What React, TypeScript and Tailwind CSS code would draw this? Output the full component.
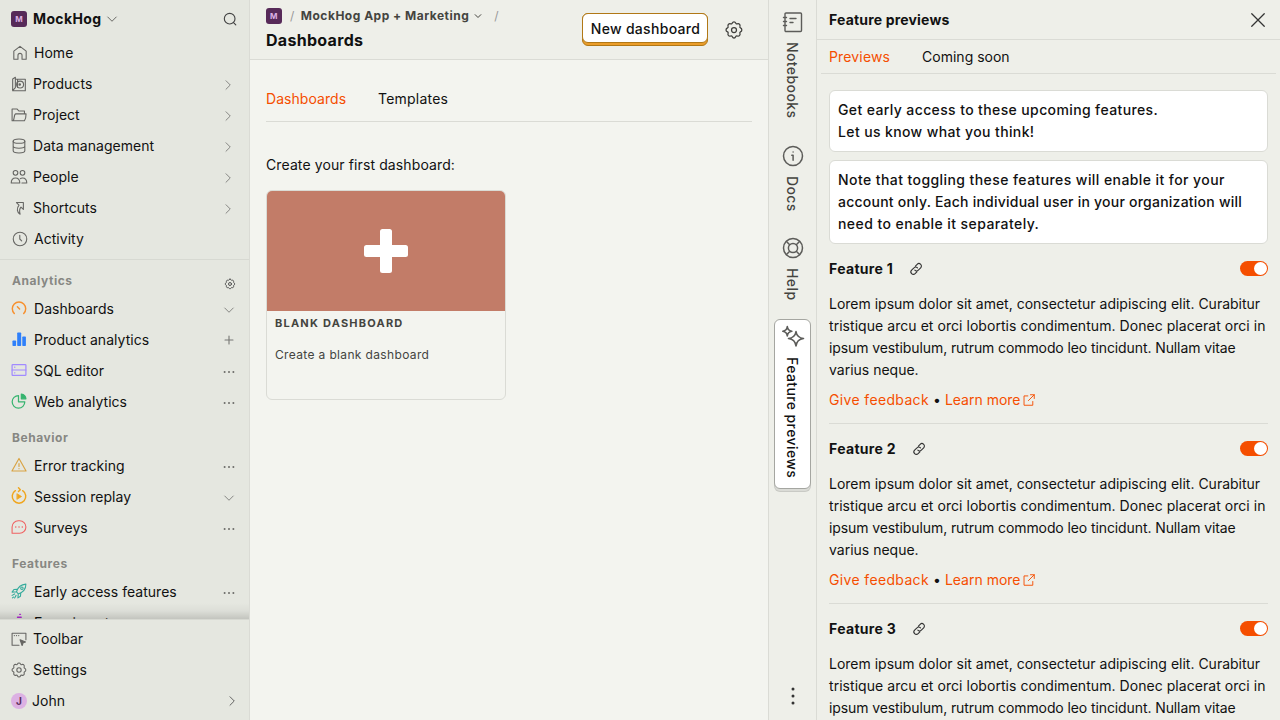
import type { ReactNode } from 'react'

type IconProps = { className?: string; width?: number; box?: string; children?: ReactNode }

function Svg({ className = '', width = 1.5, box = '0 0 24 24', children }: IconProps) {
  return (
    <svg
      viewBox={box}
      fill="none"
      stroke="currentColor"
      strokeWidth={width}
      strokeLinecap="round"
      strokeLinejoin="round"
      className={`block shrink-0 overflow-visible ${className}`}
    >
      {children}
    </svg>
  )
}

const TIGHT = '1 1 22 22'

const ChevronDown = ({ className, width = 1.8 }: IconProps) => (
  <Svg className={className} width={width}>
    <path d="M3.500 8 12 16.500 20.500 8" />
  </Svg>
)
const ChevronRight = ({ className }: IconProps) => (
  <Svg className={className} width={1.8}>
    <path d="M8 3.500 16.500 12 8 20.500" />
  </Svg>
)
const Dots = ({ className }: IconProps) => (
  <svg viewBox="0 0 24 24" fill="currentColor" className={`block shrink-0 ${className}`}>
    <circle cx="4.500" cy="12" r="1.700" />
    <circle cx="12" cy="12" r="1.700" />
    <circle cx="19.500" cy="12" r="1.700" />
  </svg>
)
const Gear = ({ className, width, box }: IconProps) => (
  <Svg className={className} width={width} box={box}>
    <path d="M12 2.300c1 0 1.800.7 2.200 1.600.3.700 1 1 1.700.7.900-.4 2-.3 2.700.5.700.7.800 1.800.5 2.700-.3.700 0 1.400.7 1.700.9.400 1.600 1.200 1.600 2.500s-.7 1.900-1.600 2.300c-.7.300-1 1-.7 1.700.3.900.2 2-.5 2.700s-1.800.8-2.700.5c-.7-.3-1.400 0-1.700.7-.4.900-1.200 1.800-2.200 1.800s-1.800-.9-2.200-1.800c-.3-.7-1-1-1.700-.7-.9.300-2 .2-2.700-.5s-.8-1.800-.5-2.700c.3-.7 0-1.400-.7-1.700-.9-.4-1.800-1.200-1.800-2.300s.9-2.100 1.800-2.500c.7-.3 1-1 .7-1.700-.3-.9-.2-2 .5-2.700.7-.8 1.800-.9 2.700-.5.700.3 1.400 0 1.700-.7.400-.9 1.200-1.600 2.200-1.600z" />
    <circle cx="12" cy="12" r="3" />
  </Svg>
)
const Search = ({ className }: IconProps) => (
  <Svg className={className} width={1.700}>
    <circle cx="11.500" cy="11.500" r="8" />
    <path d="m17.300 17.300 3.400 3.400" />
  </Svg>
)

const I = 'size-4 text-[#666663]'

const icons: Record<string, ReactNode> = {
  Home: (
    <Svg className={I} box={TIGHT}>
      <path d="M3.500 9.500 12 2.800l8.500 6.700v11h-5.700v-5.200a2.800 2.800 0 0 0-5.600 0v5.200H3.500z" />
    </Svg>
  ),
  Products: (
    <Svg className={I} box={TIGHT}>
      <path d="M7 5.500h13.700v15.700H3.300V5L7 2.800V17l-3.700 4.200M10 5.500v11" />
      <circle cx="13.500" cy="12.800" r="4.800" />
      <circle cx="13" cy="12.800" r="1" fill="currentColor" />
    </Svg>
  ),
  Project: (
    <Svg className={I} box={TIGHT}>
      <path d="M4 20h15.500c1.200-2 2.200-5 2.200-9.500H7.500C5 10.500 6 17 4 20H2.500V3.800h7l2.300 2.700h7.700v4" />
    </Svg>
  ),
  'Data management': (
    <Svg className={I} box={TIGHT}>
      <ellipse cx="12" cy="5.300" rx="8" ry="3" />
      <path d="M4 5.300v13.400c0 1.700 3.600 3 8 3s8-1.300 8-3V5.300M4 12c0 1.700 3.600 3 8 3s8-1.300 8-3" />
    </Svg>
  ),
  People: (
    <Svg className={I} box={TIGHT}>
      <circle cx="7.200" cy="6.300" r="3.200" />
      <circle cx="16.800" cy="6.300" r="3.200" />
      <path d="M1.300 20.300c0-4 2.200-7 5.900-7s5.900 3 5.900 7zM13.800 14.200c.8-.6 1.800-.9 3-.9 3.700 0 5.900 3 5.900 7H16" />
    </Svg>
  ),
  Shortcuts: (
    <Svg className={I} box={TIGHT}>
      <path d="M8.500 4.500h9.500v9.500l-3.300-3.300c-2.500 2.500-2.200 5.800-1.200 9.800C9 18 8.500 12.500 12 8z" />
    </Svg>
  ),
  Activity: (
    <Svg className={I} box={TIGHT}>
      <circle cx="12" cy="12" r="9.300" />
      <path d="M11.700 6.800V12l2.600 2.600" />
    </Svg>
  ),
  Dashboards: (
    <Svg className="mb-0.5 size-4 text-[#f7902d]" width={2} box={TIGHT}>
      <path d="M5.500 19.500a9.200 9.200 0 1 1 13 0M12.800 13.300 9.800 10.300" />
    </Svg>
  ),
  'Product analytics': (
    <svg viewBox="1 1 22 22" fill="#2f80fa" className="mb-0.5 block size-4 shrink-0">
      <rect x="3" y="14" width="5" height="7.500" rx="1" />
      <rect x="9.500" y="3" width="5.500" height="18.500" rx="1" />
      <rect x="16.500" y="8.500" width="5" height="13" rx="1" />
    </svg>
  ),
  'SQL editor': (
    <Svg className="mb-0.5 size-4 text-[#a18aff]" width={1.700} box={TIGHT}>
      <rect x="2.500" y="4.500" width="19" height="15" rx="1" />
      <path d="M2.500 12h19M6 8.200h.3M6 15.800h.3" />
    </Svg>
  ),
  'Web analytics': (
    <Svg className="mb-0.5 size-4 text-[#36b46f]" width={1.700} box={TIGHT}>
      <path d="M11.300 4.500a8.700 8.700 0 1 0 8.700 8.700h-8.700z" />
      <path d="M15.200 2.500c3.500.500 6 3 6.300 6.500h-6.300z" fill="currentColor" />
    </Svg>
  ),
  'Error tracking': (
    <Svg className="mb-0.5 size-4 text-[#d9a343]" width={1.600} box={TIGHT}>
      <path d="M12 3 2.300 20.200h19.400zM12 10v4M12 16.800v.2" />
    </Svg>
  ),
  'Session replay': (
    <Svg className="mb-0.5 size-4 text-[#f0a51c]" width={2} box={TIGHT}>
      <path d="M17 4.700a9.300 9.300 0 1 1-10 0M11.300.8 13.800 3.300 11.300 5.800" />
      <path d="m9.500 9 6 3.700-6 3.700z" fill="currentColor" strokeWidth={1} />
    </Svg>
  ),
  Surveys: (
    <Svg className="mb-0.5 size-4 text-[#f06262]" box={TIGHT}>
      <path d="M2.500 20.500V12a8.500 8.500 0 0 1 8.500-8.500h2a8.500 8.500 0 0 1 0 17z" />
      <path d="M7.500 12h.1M12 12h.1M16.500 12h.1" strokeWidth={2} />
    </Svg>
  ),
  'Early access features': (
    <Svg className="mb-0.5 size-4 text-[#35ab9c]" box={TIGHT}>
      <path d="M8.500 13c2-6.500 6-10 13-10.500 0 7-4 11.500-10.500 13.500zM9.500 9.500 5 10l-2.500 3.500 6-.5M14.500 14.500l-.5 4.800-3.500 2.200.5-5.500M6 16l-3.500 2M8 18l-2 3.500M3 21.500l1.500-1.200" />
      <circle cx="16" cy="8.200" r="1.700" />
    </Svg>
  ),
  Experiments: (
    <Svg className="mb-0.5 size-4 text-[#b62ad9]" width={2} box={TIGHT}>
      <path d="M10 5.500h5M9 9h6v5l5 7H4l5-7zM13 1.500h1" />
    </Svg>
  ),
  Toolbar: (
    <Svg className={I} box={TIGHT}>
      <path d="M12 20.500H2.500V4h19v9M5.500 7.300h.2M8.500 7.300h.2M11.500 7.300h.2" />
      <path d="m13.500 13 7.500 3-3.300 1.300L16.300 21z" fill="currentColor" />
    </Svg>
  ),
  Settings: <Gear className={I} box={TIGHT} />,
}

type Row = { label: string; end?: 'right' | 'down' | 'plus' | 'dots' }

function End({ kind }: { kind: Row['end'] }) {
  const c = 'size-3 text-[#7c7c79]'
  if (kind === 'right') return <ChevronRight className={c} />
  if (kind === 'down') return <ChevronDown className={c} />
  if (kind === 'dots') return <Dots className="mr-[-2px] size-[14px] text-[#6c6c69]" />
  if (kind === 'plus')
    return (
      <Svg className="mr-[-2px] mb-0.5 size-3 text-[#777774]" width={2.200}>
        <path d="M12 4v16M4 12h16" />
      </Svg>
    )
  return null
}

function NavRow({ row, indent }: { row: Row; indent: string }) {
  return (
    <div className="flex h-[30px] items-center">
      <div className={`flex flex-1 items-center ${indent}`}>
        {icons[row.label]}
        <span className="leading-[18px] tracking-[0.03px]">{row.label}</span>
      </div>
      <div className={`flex w-4 justify-center pt-0.5 ${row.end === 'down' ? 'mr-3' : 'mr-[13px]'}`}>
        <End kind={row.end} />
      </div>
    </div>
  )
}

function Group({ title, rows, gear }: { title: string; rows: Row[]; gear?: boolean }) {
  return (
    <section>
      <div className="flex h-[26px] items-center justify-between pr-[13px] pl-3">
        <span className="text-[12px] font-bold tracking-[0.55px] text-[#878783]">{title}</span>
        {gear && <Gear className="mt-1.5 size-3 text-[#555]" width={2} />}
      </div>
      <div className="flex flex-col gap-px">
        {rows.map((r) => (
          <NavRow key={r.label} row={r} indent="gap-[7px] pl-[11px]" />
        ))}
      </div>
    </section>
  )
}

const top: Row[] = [
  { label: 'Home' },
  { label: 'Products', end: 'right' },
  { label: 'Project', end: 'right' },
  { label: 'Data management', end: 'right' },
  { label: 'People', end: 'right' },
  { label: 'Shortcuts', end: 'right' },
  { label: 'Activity' },
]

function Sidebar() {
  return (
    <aside className="flex w-[250px] shrink-0 flex-col border-r border-[#dadbd5] bg-[#e5e7e0]">
      <div className="flex h-[38px] shrink-0 items-center pl-[11px]">
        <Badge />
        <span className="ml-1.5 text-[14px] font-bold tracking-[0.35px]">MockHog</span>
        <ChevronDown className="ml-[5px] size-3 text-[#5b5b58]" />
        <Search className="mr-[11px] ml-auto size-4 text-[#444]" />
      </div>
      <div className="flex flex-col gap-px border-b border-[#d7d9d2] pb-[5px]">
        {top.map((r) => (
          <NavRow key={r.label} row={r} indent={r.end ? 'gap-1.5 pl-[11px]' : 'gap-1.5 pl-3'} />
        ))}
      </div>
      <div className="relative flex min-h-0 flex-1 flex-col gap-2 overflow-hidden pt-2">
        <Group
          title="Analytics"
          gear
          rows={[
            { label: 'Dashboards', end: 'down' },
            { label: 'Product analytics', end: 'plus' },
            { label: 'SQL editor', end: 'dots' },
            { label: 'Web analytics', end: 'dots' },
          ]}
        />
        <Group
          title="Behavior"
          rows={[
            { label: 'Error tracking', end: 'dots' },
            { label: 'Session replay', end: 'down' },
            { label: 'Surveys', end: 'dots' },
          ]}
        />
        <Group
          title="Features"
          rows={[
            { label: 'Early access features', end: 'dots' },
            { label: 'Experiments', end: 'dots' },
          ]}
        />
        <div className="absolute inset-x-0 bottom-0 h-4 bg-linear-to-t from-black/15 via-black/4 to-transparent" />
      </div>
      <div className="flex h-[101px] shrink-0 flex-col gap-px border-t border-[#d7d9d2] pt-1">
        <NavRow row={{ label: 'Toolbar' }} indent="gap-1.5 pl-[11px]" />
        <NavRow row={{ label: 'Settings' }} indent="gap-1.5 pl-[11px]" />
        <div className="flex h-[30px] items-center pr-[11px] pl-[11px]">
          <span className="flex size-4 items-center justify-center rounded-full bg-[#dcb1e3] text-[10px] font-bold text-[#572a59]">
            J
          </span>
          <span className="ml-[5px] leading-[18px]">John</span>
          <ChevronRight className="ml-auto size-3 text-[#555]" />
        </div>
      </div>
    </aside>
  )
}

function Badge() {
  return (
    <span className="flex size-4 shrink-0 items-center justify-center rounded-[3px] bg-[#572a59] pb-px text-[8px] leading-none font-bold text-[#dcb1e3]">
      M
    </span>
  )
}

function Main() {
  return (
    <main className="flex min-w-0 flex-1 flex-col bg-[#f3f4ef]">
      <header className="flex h-[60px] shrink-0 items-center border-b border-[#dadbd5] bg-[#eeefe9] pr-6 pl-4">
        <div className="flex flex-1 flex-col pb-px">
          <div className="flex h-5 items-center text-[12px] font-bold tracking-[0.5px] text-[#44443f]">
            <Badge />
            <span className="ml-2 font-normal text-[#999]">/</span>
            <span className="ml-1.5">MockHog App + Marketing</span>
            <ChevronDown className="ml-[5px] size-2" width={3} />
            <span className="ml-3 font-normal text-[#999]">/</span>
          </div>
          <h1 className="mt-0.5 h-6 text-[16px] leading-6 font-bold tracking-[0.3px]">Dashboards</h1>
        </div>
        <button className="mr-4 h-[33px] w-[126px] rounded-[6px] border border-[#b17816] bg-[#eb9d2a] pb-[2px]">
          <span className="-mx-px -mt-px flex h-[30px] items-center justify-center rounded-[6px] border border-[#b17816] bg-white pt-0.5 pl-px font-medium tracking-[0.3px]">
            New dashboard
          </span>
        </button>
        <Gear className="size-5 text-[#3f3f3c]" />
      </header>
      <div className="flex flex-col px-4">
        <nav className="flex h-[62px] items-end gap-8 border-b border-[#dadbd5] pb-3">
          <span className="tracking-[0.05px] text-[#f54e00]">Dashboards</span>
          <span className="tracking-[0.2px]">Templates</span>
        </nav>
        <p className="mt-[33px] tracking-[0.11px]">Create your first dashboard:</p>
        <article className="mt-[15px] flex h-[210px] w-60 flex-col overflow-hidden rounded-[6px] border border-[#dadbd5]">
          <div className="flex h-[120px] items-center justify-center bg-[#c27c68]">
            <svg viewBox="0 0 44 44" className="size-11" fill="white">
              <rect x="16" width="12" height="44" rx="2.500" />
              <rect y="16" width="44" height="12" rx="2.500" />
            </svg>
          </div>
          <h2 className="mt-1 px-2 text-[11px] leading-4 font-bold tracking-[1.22px] text-[#44443f]">
            BLANK DASHBOARD
          </h2>
          <p className="mt-4 px-2 text-[12px] leading-4 tracking-[0.35px] text-[#44443f]">
            Create a blank dashboard
          </p>
        </article>
      </div>
    </main>
  )
}

function RailTab({ label, icon, className = '' }: { label: string; icon: ReactNode; className?: string }) {
  return (
    <div className={`flex flex-col items-center gap-2 ${className}`}>
      {icon}
      <span className="mr-0.5 leading-5 font-medium tracking-[0.4px] [writing-mode:vertical-rl]">{label}</span>
    </div>
  )
}

function Rail() {
  const c = 'size-6 text-[#5c5c59]'
  return (
    <div className="flex w-12 shrink-0 flex-col items-center border-l border-[#dadbd5] bg-[#eeefe9] pt-[10px] pb-3 text-[#44443f]">
      <RailTab
        label="Notebooks"
        className="h-[134px]"
        icon={
          <Svg className={c} width={1.400}>
            <rect x="4" y="3" width="16.500" height="18.500" rx="1" />
            <path d="M2.500 7.500h3M2.500 11.500h3M2.500 15.500h3M9 8.500h6M9 12.500h3" />
          </Svg>
        }
      />
      <RailTab
        label="Docs"
        className="h-[92px]"
        icon={
          <Svg className={c}>
            <circle cx="12" cy="12" r="9.500" />
            <path d="M10.800 11.300h1.300v5M12.100 8v.1" />
          </Svg>
        }
      />
      <RailTab
        label="Help"
        className="h-[83px]"
        icon={
          <Svg className={c}>
            <circle cx="12" cy="12" r="9.500" />
            <circle cx="12" cy="12" r="4.600" />
            <path d="m5.500 5.500 3.200 3.200M18.500 5.500l-3.200 3.200M5.500 18.500l3.200-3.200M18.500 18.500l-3.200-3.200" />
          </Svg>
        }
      />
      <RailTab
        label="Feature previews"
        className="h-[170px] w-[37px] rounded-[6px] border border-[#a5a6a1] bg-white pt-[5px] text-[#111] shadow-[0_3px_0_-1px_#dadbd6,0_3px_0_0_#c9cac5]"
        icon={
          <Svg className={c} width={1.600}>
            <path d="M15 6.500c.6 4.300 2.700 6.400 7.500 7-4.800.6-6.900 2.700-7.500 7.500-.6-4.800-2.700-6.900-7.500-7.500 4.800-.6 6.900-2.700 7.500-7zM6.300 1.500c.3 3 1.500 4.300 4.500 4.800-3 .5-4.200 1.700-4.500 4.700C6 8 4.800 6.800 1.800 6.300 4.800 5.800 6 4.500 6.300 1.500z" />
          </Svg>
        }
      />
      <svg viewBox="0 0 24 24" fill="#333" className="mt-auto block size-6">
        <circle cx="12" cy="5" r="1.500" />
        <circle cx="12" cy="12" r="1.500" />
        <circle cx="12" cy="19" r="1.500" />
      </svg>
    </div>
  )
}

function Feature({ name }: { name: string }) {
  return (
    <section className="flex h-[180px] shrink-0 flex-col border-b border-[#dadbd5]">
      <div className="mt-3 flex h-[26px] items-center">
        <h3 className="font-bold tracking-[0.32px]">{name}</h3>
        <Svg className="ml-4 size-[14px] text-[#333]" width={1.900}>
          <path d="m11 7 3-3a4 4 0 0 1 6 6l-4 4a4 4 0 0 1-6 0M13.500 17l-3 3a4 4 0 0 1-6-6l4-4a4 4 0 0 1 6 0" />
        </Svg>
        <span className="mb-px ml-auto flex h-[15px] w-7 items-center justify-end rounded-full border border-[#f54e00]/50 bg-[#f54e00]">
          <span className="size-[13px] rounded-full bg-white" />
        </span>
      </div>
      <p className="mt-[11px] leading-[22px] whitespace-nowrap">
        Lorem ipsum dolor sit amet, consectetur adipiscing elit. Curabitur
        <br />
        <span className="tracking-[0.05px]">tristique arcu et orci lobortis condimentum. Donec placerat orci in</span>
        <br />
        <span className="tracking-[-0.1px]">ipsum vestibulum, rutrum commodo leo tincidunt. Nullam vitae</span>
        <br />
        varius neque.
      </p>
      <p className="mt-2 flex items-center leading-[22px] text-[#f54e00]">
        <span className="tracking-[0.35px]">Give feedback</span>
        <span className="mr-1 ml-1 text-[#111]">•</span>
        Learn more
        <Svg className="ml-px size-[14px]" width={1.600}>
          <path d="M10 5H3.500v16h15V14.500M14.500 3h6.500v6.500M21 3 11 13" />
        </Svg>
      </p>
    </section>
  )
}

function Panel() {
  return (
    <aside className="flex w-[464px] shrink-0 flex-col overflow-hidden border-l border-[#dadbd5] bg-[#eeefe9]">
      <div className="flex h-10 shrink-0 items-center justify-between border-b border-[#dadbd5] pr-3 pl-3">
        <h2 className="font-bold tracking-[0.18px]">Feature previews</h2>
        <Svg className="size-5 text-[#333]">
          <path d="m4.500 4.500 15 15M19.500 4.500l-15 15" />
        </Svg>
      </div>
      <nav className="mx-1 flex h-[34px] shrink-0 items-center gap-8 border-b border-[#dadbd5] px-2">
        <span className="tracking-[0.15px] text-[#f54e00]">Previews</span>
        <span>Coming soon</span>
      </nav>
      <div className="flex min-h-0 flex-1 flex-col px-3 pt-4">
        <div className="shrink-0 rounded-[6px] border border-[#dadbd5] bg-white p-2 leading-[22px] font-medium tracking-[0.38px]">
          Get early access to these upcoming features.
          <br />
          Let us know what you think!
        </div>
        <div className="mt-2 shrink-0 rounded-[6px] border border-[#dadbd5] bg-white p-2 leading-[22px] font-medium whitespace-nowrap">
          <span className="tracking-[0.42px]">Note that toggling these features will enable it for your</span>
          <br />
          <span className="tracking-[0.23px]">account only. Each individual user in your organization will</span>
          <br />
          <span className="tracking-[0.43px]">need to enable it separately.</span>
        </div>
        <Feature name="Feature 1" />
        <Feature name="Feature 2" />
        <Feature name="Feature 3" />
      </div>
    </aside>
  )
}

export default function App() {
  return (
    <div className="flex h-[720px] w-[1280px] overflow-hidden font-['Inter',sans-serif] text-[14px] leading-5 text-[#111]">
      <Sidebar />
      <Main />
      <Rail />
      <Panel />
    </div>
  )
}
